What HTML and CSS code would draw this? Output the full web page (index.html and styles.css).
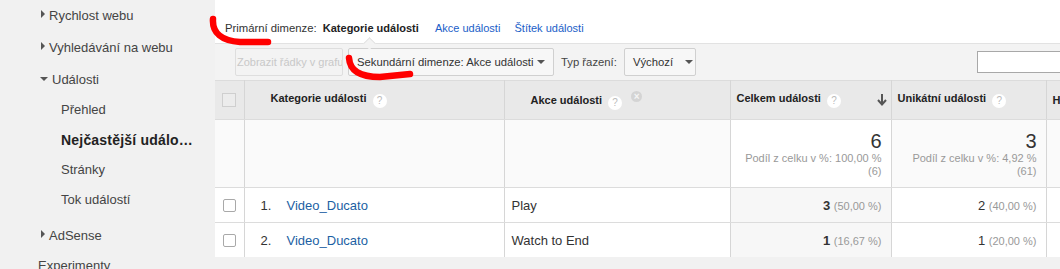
FILE: index.html
```html
<!doctype html>
<html lang="cs">
	<head>
		<meta charset="UTF-8" />
		<title>Nejčastější události</title>
		<link rel="stylesheet" href="styles.css">
	</head>
	<body>
		<div class="page">
			<nav class="sidebar">
				<div class="nav-item"><span class="tri right"></span>Rychlost webu</div>
				<div class="nav-item"><span class="tri right"></span>Vyhledávání na webu</div>
				<div class="nav-item"><span class="tri down"></span>Události</div>
				<div class="nav-sub">
					<div class="sub-item">Přehled</div>
					<div class="sub-item active">Nejčastější událo…</div>
					<div class="sub-item">Stránky</div>
					<div class="sub-item">Tok událostí</div>
				</div>
				<div class="nav-item"><span class="tri right"></span>AdSense</div>
				<div class="nav-item plain">Experimenty</div>
			</nav>

			<main class="main">
				<div class="dimensions">
					<span class="dim-label">Primární dimenze:</span>
					<span class="dim-current">Kategorie události</span>
					<a class="dim-link">Akce události</a>
					<a class="dim-link">Štítek události</a>
				</div>

				<div class="toolbar">
					<span class="notch"></span>
					<button class="btn" disabled>Zobrazit řádky v grafu</button>
					<div class="select secondary">Sekundární dimenze: Akce události<span class="caret"></span></div>
					<span class="sort-label">Typ řazení:</span>
					<div class="select sort">Výchozí<span class="caret"></span></div>
					<input class="search" type="text">
				</div>

				<table class="report">
					<colgroup>
						<col class="c-check"><col class="c-cat"><col class="c-act"><col class="c-total"><col class="c-uniq"><col class="c-rest">
					</colgroup>
					<thead>
						<tr>
							<th class="check"><span class="box"></span></th>
							<th class="dim-head cat">Kategorie události <span class="help">?</span></th>
							<th class="dim-head act">Akce události <span class="help">?</span><span class="remove">×</span></th>
							<th class="metric sorted">Celkem události <span class="help">?</span>
								<svg class="arrow" width="10" height="12" viewBox="0 0 10 12"><path d="M5 0 V10 M1 6 L5 10.5 L9 6" /></svg>
							</th>
							<th class="metric">Unikátní události <span class="help">?</span></th>
							<th class="metric">H</th>
						</tr>
					</thead>
					<tbody>
						<tr class="totals">
							<td></td>
							<td></td>
							<td></td>
							<td class="num sorted">
								<div class="big">6</div>
								<div class="share">Podíl z celku v %: 100,00 %</div>
								<div class="share">(6)</div>
							</td>
							<td class="num">
								<div class="big">3</div>
								<div class="share">Podíl z celku v %: 4,92 %</div>
								<div class="share">(61)</div>
							</td>
							<td></td>
						</tr>
						<tr class="row">
							<td class="check"><span class="cb"></span></td>
							<td class="cat"><span class="idx">1.</span><a class="link">Video_Ducato</a></td>
							<td class="act">Play</td>
							<td class="num sorted"><b>3</b> <span class="pct">(50,00 %)</span></td>
							<td class="num">2 <span class="pct">(40,00 %)</span></td>
							<td></td>
						</tr>
						<tr class="row">
							<td class="check"><span class="cb"></span></td>
							<td class="cat"><span class="idx">2.</span><a class="link">Video_Ducato</a></td>
							<td class="act">Watch to End</td>
							<td class="num sorted"><b>1</b> <span class="pct">(16,67 %)</span></td>
							<td class="num">1 <span class="pct">(20,00 %)</span></td>
							<td></td>
						</tr>
					</tbody>
				</table>
			</main>
		</div>

		<!-- red marker annotations drawn over the screenshot -->
		<svg class="marks" width="1060" height="269" viewBox="0 0 1060 269">
			<path d="M213 19 C212 33, 222 41, 240 42 L268 42" />
			<path d="M349 58 C350 71, 360 77, 380 77 L410 74" />
		</svg>
	</body>
</html>
```

FILE: styles.css
```css
body {
	margin: 0;
	font-family: "Liberation Sans", Arial, sans-serif;
	color: #333;
	background-color: #f1f1f1;
	overflow: hidden;
}
.page {
	display: flex;
	width: 1060px;
	height: 269px;
	overflow: hidden;
}
.sidebar {
	width: 215px;
	flex: none;
	font-size: 13px;
	color: #444;
}
.nav-item {
	height: 32px;
	line-height: 32px;
	padding-left: 41px;
	white-space: nowrap;
}
.nav-item.plain {
	padding-left: 38px;
	line-height: 28px;
}
.tri {
	display: inline-block;
	width: 0;
	height: 0;
	margin-right: 4px;
	vertical-align: 2px;
}
.tri.right {
	border-top: 4px solid transparent;
	border-bottom: 4px solid transparent;
	border-left: 4px solid #555;
}
.tri.down {
	border-left: 4px solid transparent;
	border-right: 4px solid transparent;
	border-top: 4px solid #555;
	margin-left: -1px;
	vertical-align: 3px;
}
.nav-sub {
	margin: -1px 0 5px;
}
.sub-item {
	height: 30px;
	line-height: 30px;
	padding-left: 61px;
}
.sub-item.active {
	font-weight: bold;
	font-size: 14px;
	letter-spacing: 0.2px;
	color: #222;
}
.main {
	flex: 1;
	min-width: 0;
	background-color: #fff;
	height: 257px;
	overflow: hidden;
	position: relative;
}
.dimensions {
	height: 43px;
	box-sizing: border-box;
	padding: 20px 0 0 10px;
	font-size: 11.3px;
	line-height: 16px;
	white-space: nowrap;
}
.dim-label {
	color: #333;
	margin-right: 3px;
}
.dim-current {
	font-weight: bold;
	font-size: 11px;
	color: #222;
	margin-right: 13px;
}
.dim-link {
	color: #1a5ec8;
	font-size: 11px;
	margin-right: 11px;
}
.toolbar {
	position: relative;
	display: flex;
	align-items: center;
	height: 37px;
	box-sizing: border-box;
	padding: 0 0 1px 20px;
	border-top: 1px solid #e2e2e2;
	background-color: #f3f3f3;
	font-size: 11px;
	white-space: nowrap;
}
.notch {
	position: absolute;
	left: 150px;
	top: -5px;
	width: 8px;
	height: 8px;
	background-color: #f3f3f3;
	border-top: 1px solid #e2e2e2;
	border-left: 1px solid #e2e2e2;
	transform: rotate(45deg);
}
.btn {
	height: 28px;
	width: 108px;
	padding: 0;
	font-family: inherit;
	font-size: 11px;
	color: #c8c8c8;
	background-color: #f3f3f3;
	border: 1px solid #dedede;
	border-radius: 2px;
	overflow: hidden;
	white-space: nowrap;
	text-align: left;
	padding-left: 1px;
}
.select {
	display: flex;
	align-items: center;
	height: 28px;
	box-sizing: border-box;
	padding: 0 8px 0 8px;
	border: 1px solid #d0d0d0;
	border-radius: 2px;
	background-color: #f7f7f7;
	color: #333;
	font-size: 11.3px;
}
.select.secondary {
	width: 206px;
	margin-left: 5px;
	justify-content: space-between;
}
.select.sort {
	width: 72px;
	gap: 12px;
}
.caret {
	width: 0;
	height: 0;
	border-left: 4px solid transparent;
	border-right: 4px solid transparent;
	border-top: 4px solid #555;
}
.sort-label {
	margin: 0 7px 0 7px;
	color: #444;
	font-size: 11.3px;
}
.search {
	margin-left: auto;
	width: 100px;
	height: 22px;
	box-sizing: border-box;
	border: 1px solid #a8a8a8;
	margin-right: -17px;
	background-color: #fff;
}
.report {
	border-collapse: collapse;
	table-layout: fixed;
	width: 960px;
	font-size: 11px;
	border-top: 1px solid #dcdcdc;
}
.c-check { width: 29px; }
.c-cat { width: 260px; }
.c-act { width: 226px; }
.c-total { width: 161px; }
.c-uniq { width: 155px; }
.c-rest { width: 129px; }
.report th,
.report td {
	border-right: 1px solid #d6d6d6;
	border-bottom: 1px solid #dcdcdc;
	padding: 0;
	white-space: nowrap;
	overflow: hidden;
}
.report thead th {
	height: 38px;
	background-color: #e9e9e9;
	font-weight: bold;
	color: #222;
	text-align: left;
}
.report th.dim-head.cat {
	padding-left: 26px;
}
.report th.dim-head.act {
	padding-left: 26px;
}
.report th.metric {
	padding-left: 6px;
	position: relative;
}
.box {
	display: block;
	width: 12px;
	height: 12px;
	margin: 0 auto;
	border: 1px solid #cfcfcf;
	background-color: #ececec;
}
.help {
	display: inline-block;
	width: 14px;
	height: 14px;
	margin-left: 3px;
	border-radius: 50%;
	background-color: #fff;
	color: #bbb;
	font-size: 10px;
	font-weight: normal;
	line-height: 14px;
	text-align: center;
	vertical-align: -2px;
}
.remove {
	display: inline-block;
	width: 11px;
	height: 11px;
	margin: 0 0 0 9px;
	border-radius: 50%;
	background-color: #d4d4d4;
	color: #f4f4f4;
	font-size: 10px;
	line-height: 11px;
	text-align: center;
	vertical-align: 4px;
}
.arrow {
	position: absolute;
	right: 4px;
	top: 13px;
}
.arrow path {
	fill: none;
	stroke: #555;
	stroke-width: 2;
}
.totals td {
	height: 57px;
	background-color: #fafafa;
}
.totals td.num {
	text-align: right;
	padding-right: 9px;
	vertical-align: top;
	padding-top: 10px;
}
.totals td.num.sorted {
	background-color: #fff;
}
.big {
	font-size: 20px;
	line-height: 22px;
	color: #333;
}
.share {
	font-size: 11px;
	line-height: 13px;
	color: #999;
}
.row td {
	height: 34px;
	background-color: #fff;
}
.row td.check {
	text-align: center;
}
.cb {
	display: block;
	width: 11px;
	height: 11px;
	margin: 0 auto;
	border: 1px solid #a9a9a9;
	border-radius: 2px;
	background-color: #fff;
}
.row td.cat {
	padding-left: 16px;
	font-size: 13px;
}
.idx {
	display: inline-block;
	width: 26px;
	color: #333;
}
.link {
	color: #1c5fa3;
}
.row td.act {
	padding-left: 7px;
	font-size: 13px;
}
.row td.num {
	text-align: right;
	padding-right: 9px;
	font-size: 13px;
}
.row td.num.sorted {
	background-color: #f7f7f7;
}
.pct {
	font-size: 11px;
	color: #999;
}
.marks {
	position: absolute;
	left: 0;
	top: 0;
	pointer-events: none;
}
.marks path {
	fill: none;
	stroke: #f00;
	stroke-width: 6.5;
	stroke-linecap: round;
}
```
